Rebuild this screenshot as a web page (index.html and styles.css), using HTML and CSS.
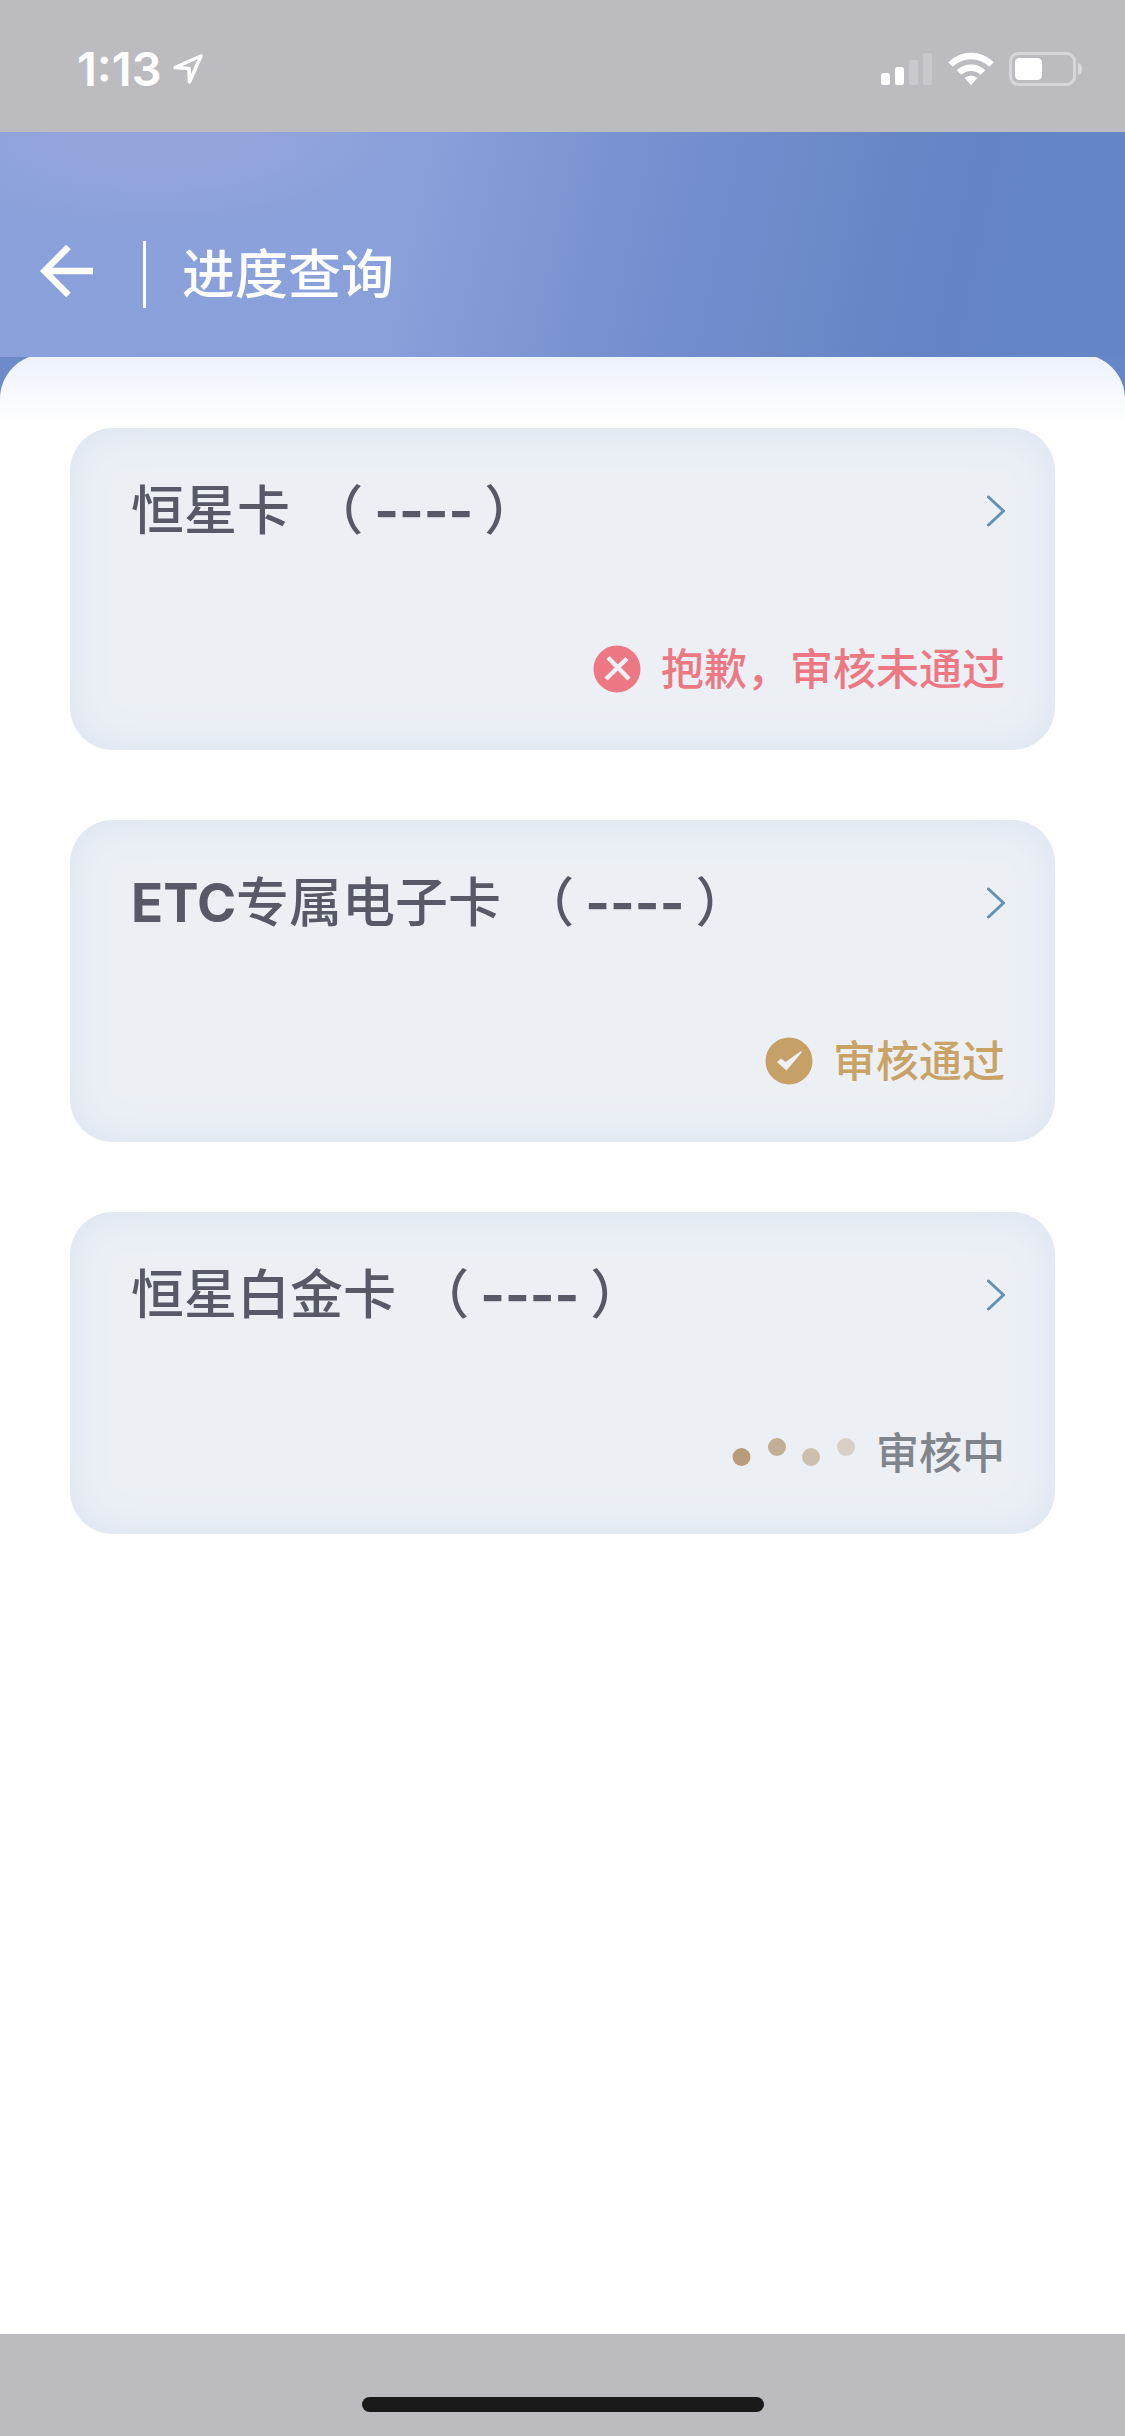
FILE: index.html
```html
<!DOCTYPE html>
<html lang="zh-CN">
<head>
<meta charset="utf-8">
<meta name="viewport" content="width=device-width, initial-scale=1">
<title>进度查询</title>
<link rel="stylesheet" href="styles.css">
</head>
<body>
<div class="status-bar">
  <div class="status-left">
    <span class="time">1:13</span>
    <svg class="location" width="30" height="32" viewBox="0 0 30 32" aria-hidden="true"><path d="M28 3 L16.500 29 L16 15.500 L2 14.500 Z" fill="none" stroke="#fff" stroke-width="3.500" stroke-linejoin="round"/></svg>
  </div>
  <div class="status-right">
    <svg width="52" height="34" viewBox="0 0 52 34" aria-hidden="true">
      <g fill="#fff"><rect x="0" y="21" width="9" height="12" rx="2.500"/><rect x="14" y="15" width="9" height="18" rx="2.500"/></g>
      <g fill="#fff" opacity=".2"><rect x="28" y="8" width="9" height="25" rx="2.500"/><rect x="42" y="1" width="9" height="32" rx="2.500"/></g>
    </svg>
    <svg width="46" height="34" viewBox="0 0 46 34" aria-hidden="true">
      <g fill="none" stroke="#fff" stroke-width="6.500"><path d="M2.500 12.500 C14 1 32 1 43.500 12.500"/><path d="M11 20.500 C17.500 14 28.500 14 35 20.500"/></g>
      <path d="M16.500 26 Q23 21 29.500 26 L23 33 Z" fill="#fff"/>
    </svg>
    <svg width="74" height="36" viewBox="0 0 74 36" aria-hidden="true">
      <rect x="1.500" y="2.500" width="64" height="31" rx="8" fill="none" stroke="#fff" stroke-width="3" opacity=".4"/>
      <path d="M69 12 Q73 13 73 18 Q73 23 69 24 Z" fill="#fff" opacity=".45"/>
      <rect x="6" y="7" width="27" height="22" rx="4.500" fill="#fff"/>
    </svg>
  </div>
</div>
<header class="header">
  <button class="back" type="button" aria-label="返回">
    <svg width="54" height="60" viewBox="0 0 54 60" aria-hidden="true"><path d="M53 26 H5 M28.500 2 L4.500 26 L28.500 50" fill="none" stroke="#fff" stroke-width="6.500"/></svg>
  </button>
  <h1 class="title">进度查询</h1>
</header>
<main class="backdrop">
  <ul class="sheet">
    <li><a class="card" href="#card-1">
      <span class="card-head"><span class="card-name">恒星卡 <span class="card-number">（<b>----</b>）</span></span>
        <svg class="chevron" width="18" height="32" viewBox="0 0 18 32" aria-hidden="true"><path d="M1.500 2 L16.500 16 L1.500 30"/></svg></span>
      <span class="state rejected">
        <svg width="48" height="48" viewBox="0 0 48 48" aria-hidden="true"><circle cx="24" cy="24" r="23.500" fill="#ed7884"/><path d="M15 12.500 L36 34 M34 13.500 L13 34" fill="none" stroke="#eef1f6" stroke-width="4.500"/></svg>
        <span>抱歉，审核未通过</span></span>
    </a></li>
    <li><a class="card" href="#card-2">
      <span class="card-head"><span class="card-name"><b>ETC</b>专属电子卡 <span class="card-number">（<b>----</b>）</span></span>
        <svg class="chevron" width="18" height="32" viewBox="0 0 18 32" aria-hidden="true"><path d="M1.500 2 L16.500 16 L1.500 30"/></svg></span>
      <span class="state approved">
        <svg width="48" height="48" viewBox="0 0 48 48" aria-hidden="true"><circle cx="24" cy="24" r="23.500" fill="#c5a168"/><path d="M12 25 L16 21.500 L20.500 25 L36 14 L37 15 L21.500 33.500 Z" fill="#eef1f6"/></svg>
        <span>审核通过</span></span>
    </a></li>
    <li><a class="card" href="#card-3">
      <span class="card-head"><span class="card-name">恒星白金卡 <span class="card-number">（<b>----</b>）</span></span>
        <svg class="chevron" width="18" height="32" viewBox="0 0 18 32" aria-hidden="true"><path d="M1.500 2 L16.500 16 L1.500 30"/></svg></span>
      <span class="state pending">
        <svg width="124" height="48" viewBox="0 0 124 48" aria-hidden="true"><circle cx="9.500" cy="28" r="9" fill="#b89c79"/><circle cx="45" cy="18" r="9" fill="#c2ae93"/><circle cx="79" cy="28" r="9" fill="#cdbfad"/><circle cx="114" cy="18" r="9" fill="#d8d0c6"/></svg>
        <span>审核中</span></span>
    </a></li>
  </ul>
</main>
<footer class="home-bar"><div class="home-indicator"></div></footer>
</body>
</html>
```
FILE: styles.css
```css
* {
  box-sizing: border-box;
}

body {
  margin: 0;
  min-height: 100vh;
  display: flex;
  flex-direction: column;
  background: #fff;
  font-family: "Inter", "Noto Sans CJK SC", sans-serif;
}

svg {
  display: block;
  flex: none;
}

.status-bar {
  height: 132px;
  padding: 6px 42px 0 77px;
  display: flex;
  align-items: center;
  justify-content: space-between;
  background: #bcbbc0;
  color: #fff;
}

.status-left {
  display: flex;
  align-items: center;
  gap: 11px;
}

.time {
  font-size: 47px;
  line-height: 54px;
  font-weight: 600;
}

.status-right {
  display: flex;
  align-items: center;
  gap: 15px;
}

.header {
  position: relative;
  z-index: 1;
  height: 225px;
  padding: 60px 40px 0;
  display: flex;
  align-items: center;
  background:
    radial-gradient(ellipse 260px 100px at 14% 0, #94a5db 30%, #94a5db00 100%),
    linear-gradient(102deg, #8ba1db 0%, #8aa0db 36%, #7690d0 56%, #6c89c8 72%, #6383c4 84%, #6486c7 100%);
}

.back {
  padding: 0;
  border: 0;
  background: none;
}

.title {
  margin: 0 0 0 49px;
  padding: 0 0 7px 36px;
  border-left: 3px solid #fff;
  color: #fff;
  font-family: "Noto Sans CJK SC", sans-serif;
  font-size: 53px;
  line-height: 60px;
  font-weight: 500;
}

.backdrop {
  flex: 1;
  display: flex;
  flex-direction: column;
  background: linear-gradient(90deg, #6d8ac9, #6687c8);
}

.sheet {
  flex: 1;
  margin: -3px 0 0;
  padding: 74px 70px;
  display: flex;
  flex-direction: column;
  gap: 70px;
  list-style: none;
  border-radius: 45px 45px 0 0;
  background: linear-gradient(#ecf1fd, #fff 70px);
}

.card {
  padding: 50px 50px 51px 61px;
  display: flex;
  flex-direction: column;
  gap: 95px;
  border-radius: 43px;
  background: #ecf0f5;
  box-shadow: inset 0 0 44px #d9e3f2;
  color: #575a66;
  text-decoration: none;
}

.card-head {
  display: flex;
  align-items: center;
  justify-content: space-between;
}

.card-name {
  font-size: 53px;
  line-height: 66px;
  font-weight: 500;
}

.card-name b {
  font-weight: 700;
}

.card-number {
  margin-left: 6px;
}

.card-number b {
  margin: 0 11px;
}

.chevron {
  fill: none;
  stroke: #6590b3;
  stroke-width: 3;
  stroke-linecap: round;
  stroke-linejoin: round;
}

.state {
  display: flex;
  align-items: center;
  justify-content: flex-end;
  gap: 20px;
  font-size: 43px;
  line-height: 60px;
  font-weight: 500;
}

.rejected {
  color: #ed7884;
}

.approved {
  color: #c9a266;
}

.pending {
  color: #80848b;
}

.home-bar {
  height: 102px;
  display: flex;
  align-items: flex-end;
  justify-content: center;
  padding-bottom: 24px;
  background: #bcbbc0;
}

.home-indicator {
  width: 402px;
  height: 15px;
  border-radius: 8px;
  background: #1a1a1a;
}
```
